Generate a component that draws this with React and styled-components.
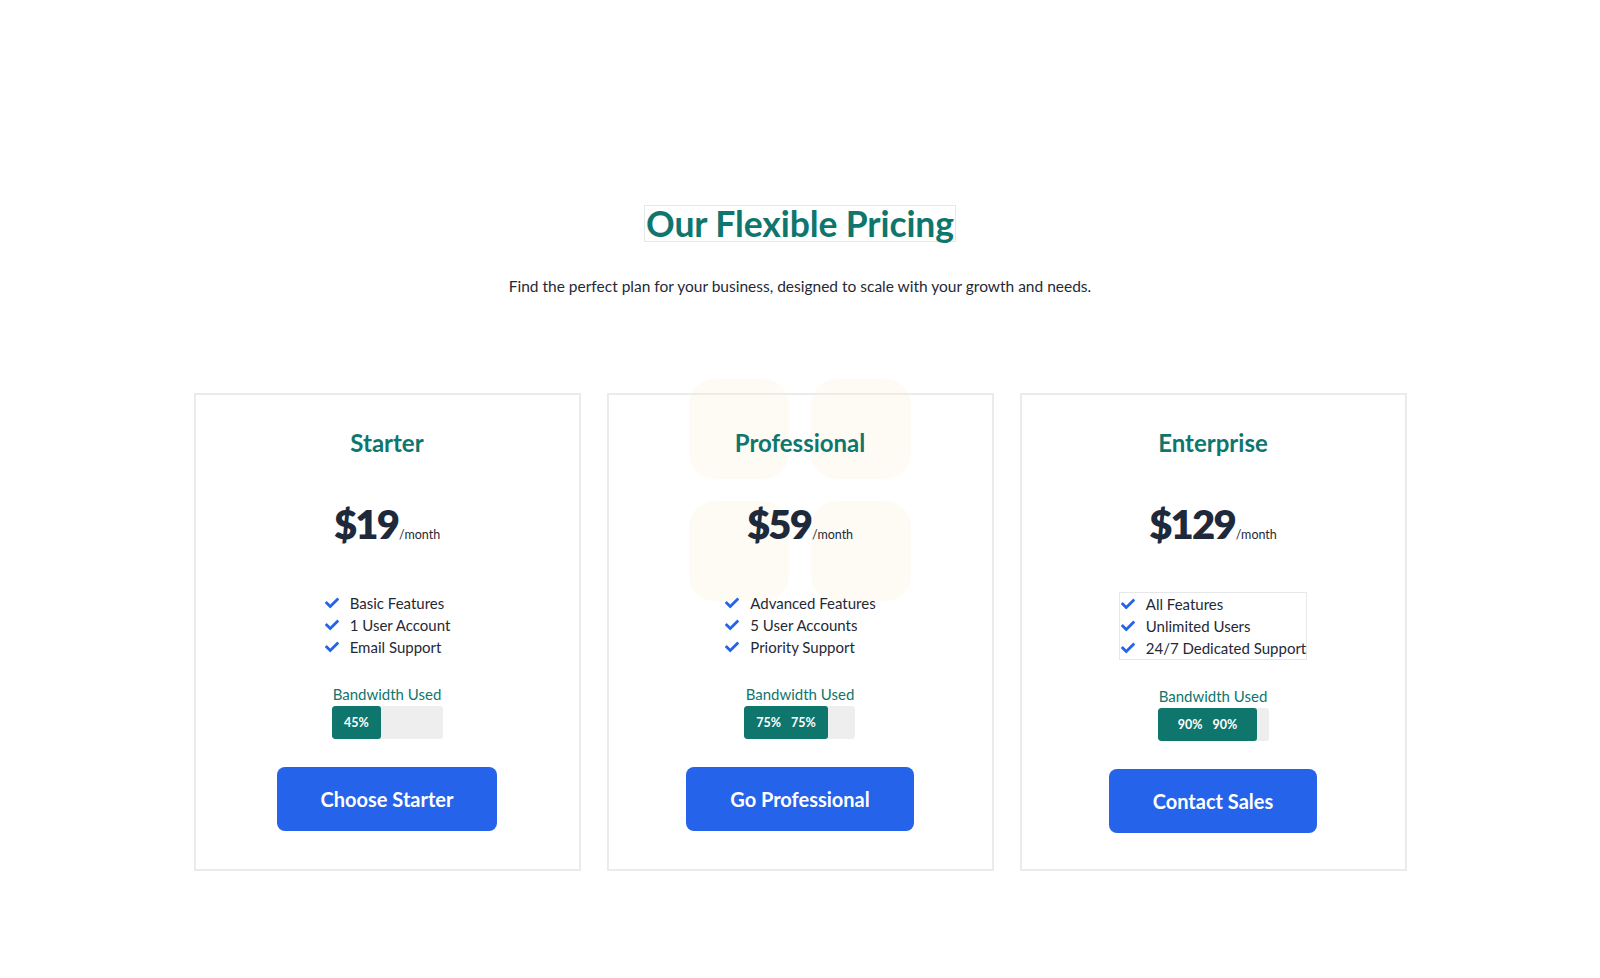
import React from "react";
import styled, { createGlobalStyle } from "styled-components";
import { FaCheck } from "react-icons/fa";

const GlobalStyle = createGlobalStyle`
  * { box-sizing: border-box; }
  html, body { margin: 0; padding: 0; background: #ffffff; }
  body { font-family: "Lato", "Noto Sans", sans-serif; color: #1f2937; }
`;

const Page = styled.section`
  min-height: 978px;
  padding-top: 205px;
  display: flex;
  flex-direction: column;
  align-items: center;
`;

const Title = styled.h2`
  margin: 0;
  display: inline-block;
  border: 1px solid #e5e7eb;
  font-size: 35.5px;
  line-height: 35px;
  font-weight: 700;
  color: #0f766e;
  letter-spacing: -0.1px;
  padding: 0 1px;
`;

const Subtitle = styled.p`
  margin: 33px 0 0;
  font-size: 15.5px;
  line-height: 22px;
  color: #1f2937;
`;

const Grid = styled.div`
  margin-top: 96px;
  display: grid;
  grid-template-columns: repeat(3, 387px);
  gap: 26px;
`;

const Card = styled.div`
  position: relative;
  border: 2px solid #ebebeb;
  background: #ffffff;
  padding: 32px 24px 36px;
  display: flex;
  flex-direction: column;
  align-items: center;
`;

const Decor = styled.div`
  position: absolute;
  top: -16px;
  left: 50%;
  transform: translateX(-50%);
  display: grid;
  grid-template-columns: repeat(2, 100px);
  gap: 22px;
  pointer-events: none;
  z-index: 0;
`;

const DecorSquare = styled.div`
  width: 100px;
  height: 100px;
  border-radius: 26px;
  background: rgba(245, 238, 205, 0.22);
`;

const Content = styled.div`
  position: relative;
  z-index: 1;
  display: flex;
  flex-direction: column;
  align-items: center;
`;

const PlanName = styled.h3`
  margin: 0;
  font-size: 24px;
  line-height: 32px;
  font-weight: 700;
  color: #0f766e;
`;

const PriceRow = styled.div`
  margin-top: 45px;
  display: flex;
  align-items: baseline;
  height: 40px;
`;

const Amount = styled.span`
  font-size: 40px;
  line-height: 40px;
  font-weight: 800;
  color: #1e293b;
  letter-spacing: -1.8px;
`;

const Per = styled.span`
  font-size: 12.5px;
  color: #1f2937;
  margin-left: 1px;
`;

const Features = styled.ul`
  margin: 48px 0 0;
  padding: 0;
  list-style: none;
  border: ${(p) => (p.$outlined ? "1px solid #e5e7eb" : "none")};
`;

const Feature = styled.li`
  display: flex;
  align-items: center;
  font-size: 15px;
  line-height: 22px;
  color: #1f2937;
  svg {
    width: 16px;
    height: 14px;
    color: #2563eb;
    margin-right: 10px;
    flex-shrink: 0;
  }
`;

const UsageLabel = styled.div`
  margin-top: 25px;
  font-size: 15px;
  line-height: 22px;
  color: #0f766e;
`;

const Bar = styled.div`
  margin-top: 1px;
  width: 111px;
  height: 33px;
  background: #eeeeee;
  border-radius: 3px;
  overflow: hidden;
  display: flex;
`;

const Fill = styled.div`
  height: 100%;
  background: #0f766e;
  border-radius: 3px;
  display: flex;
  align-items: center;
  justify-content: center;
  gap: 10px;
  color: #ffffff;
  font-size: 12.5px;
  font-weight: 700;
`;

const Button = styled.button`
  margin-top: 28px;
  height: 64px;
  padding: 0 44px;
  border: none;
  border-radius: 8px;
  background: #2563eb;
  color: #ffffff;
  font-family: "Lato", "Noto Sans", sans-serif;
  font-size: 20px;
  font-weight: 700;
  cursor: pointer;
`;

const plans = [
  {
    name: "Starter",
    price: "$19",
    features: ["Basic Features", "1 User Account", "Email Support"],
    usage: 45,
    labels: ["45%"],
    cta: "Choose Starter",
  },
  {
    name: "Professional",
    price: "$59",
    features: ["Advanced Features", "5 User Accounts", "Priority Support"],
    usage: 75,
    labels: ["75%", "75%"],
    cta: "Go Professional",
    decor: true,
  },
  {
    name: "Enterprise",
    price: "$129",
    features: ["All Features", "Unlimited Users", "24/7 Dedicated Support"],
    usage: 90,
    labels: ["90%", "90%"],
    cta: "Contact Sales",
    outlined: true,
  },
];

export default function App() {
  return (
    <>
      <GlobalStyle />
      <Page>
        <Title>Our Flexible Pricing</Title>
        <Subtitle>
          Find the perfect plan for your business, designed to scale with your growth and needs.
        </Subtitle>
        <Grid>
          {plans.map((plan) => (
            <Card key={plan.name}>
              {plan.decor && (
                <Decor>
                  <DecorSquare />
                  <DecorSquare />
                  <DecorSquare />
                  <DecorSquare />
                </Decor>
              )}
              <Content>
                <PlanName>{plan.name}</PlanName>
                <PriceRow>
                  <Amount>{plan.price}</Amount>
                  <Per>/month</Per>
                </PriceRow>
                <Features $outlined={plan.outlined}>
                  {plan.features.map((f) => (
                    <Feature key={f}>
                      <FaCheck />
                      {f}
                    </Feature>
                  ))}
                </Features>
                <UsageLabel>Bandwidth Used</UsageLabel>
                <Bar>
                  <Fill style={{ width: `${plan.usage}%` }}>
                    {plan.labels.map((l, i) => (
                      <span key={i}>{l}</span>
                    ))}
                  </Fill>
                </Bar>
                <Button>{plan.cta}</Button>
              </Content>
            </Card>
          ))}
        </Grid>
      </Page>
    </>
  );
}
